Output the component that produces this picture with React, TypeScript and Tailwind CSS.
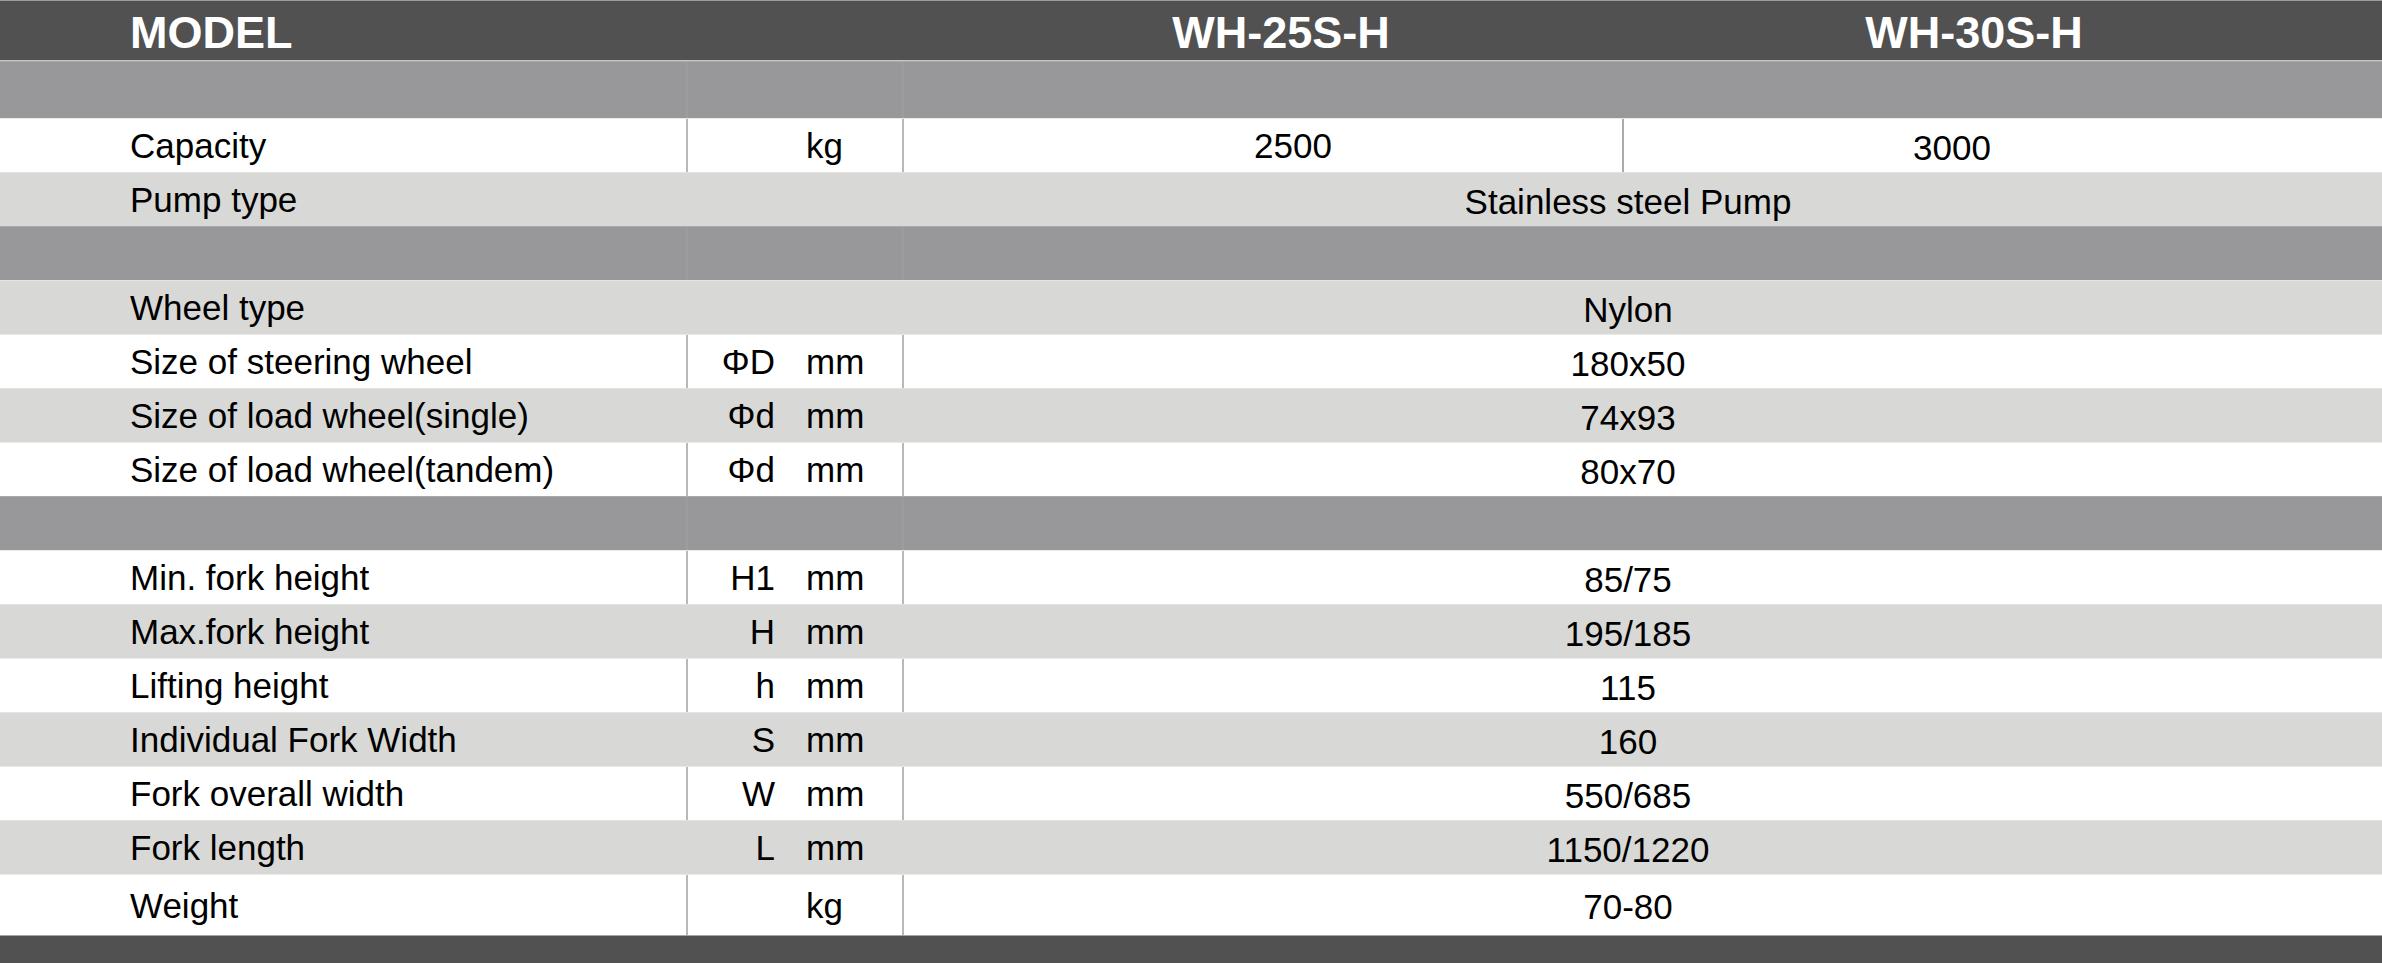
type Spec = {
  kind: "spec";
  label: string;
  sym?: string;
  unit?: string;
  value: string | [string, string];
  tone: "white" | "light";
  tall?: boolean;
};

type Section = { kind: "section"; first?: boolean };

type Row = Spec | Section;

const rows: Row[] = [
  { kind: "section", first: true },
  { kind: "spec", label: "Capacity", unit: "kg", value: ["2500", "3000"], tone: "white" },
  { kind: "spec", label: "Pump type", value: "Stainless steel Pump", tone: "light" },
  { kind: "section" },
  { kind: "spec", label: "Wheel type", value: "Nylon", tone: "light" },
  { kind: "spec", label: "Size of steering wheel", sym: "ΦD", unit: "mm", value: "180x50", tone: "white" },
  { kind: "spec", label: "Size of load wheel(single)", sym: "Φd", unit: "mm", value: "74x93", tone: "light" },
  { kind: "spec", label: "Size of load wheel(tandem)", sym: "Φd", unit: "mm", value: "80x70", tone: "white" },
  { kind: "section" },
  { kind: "spec", label: "Min. fork height", sym: "H1", unit: "mm", value: "85/75", tone: "white" },
  { kind: "spec", label: "Max.fork height", sym: "H", unit: "mm", value: "195/185", tone: "light" },
  { kind: "spec", label: "Lifting height", sym: "h", unit: "mm", value: "115", tone: "white" },
  { kind: "spec", label: "Individual Fork Width", sym: "S", unit: "mm", value: "160", tone: "light" },
  { kind: "spec", label: "Fork overall width", sym: "W", unit: "mm", value: "550/685", tone: "white" },
  { kind: "spec", label: "Fork length", sym: "L", unit: "mm", value: "1150/1220", tone: "light" },
  { kind: "spec", label: "Weight", unit: "kg", value: "70-80", tone: "white", tall: true },
];

export default function App() {
  return (
    <div className="flex h-[963px] w-[2382px] flex-col overflow-hidden bg-white font-['Liberation_Sans',Arial,sans-serif] text-black">
      {/* Header */}
      <div className="flex h-[61px] shrink-0 items-center border-t border-b border-t-[#9c9c9c] border-b-[#c6c6c6] bg-[#515151] text-[45px] leading-none font-bold text-white">
        <div className="w-[904px] pt-[3px] pl-[130px]">MODEL</div>
        <div className="w-[720px] pt-[3px] pl-[34px] text-center">WH-25S-H</div>
        <div className="flex-1 pt-[3px] pr-[58px] text-center">WH-30S-H</div>
      </div>

      {rows.map((row, i) =>
        row.kind === "section" ? (
          <div
            key={i}
            className={`flex shrink-0 border-t border-[#a9a9ab] bg-[#98989a] ${
              row.first ? "h-[57px]" : "h-[54px]"
            }`}
          >
            <div className="w-[688px] border-r-2 border-[#9c9c9e]" />
            <div className="w-[216px] border-r-2 border-[#9c9c9e]" />
          </div>
        ) : (
          <SpecRow key={i} row={row} />
        )
      )}

      {/* Footer */}
      <div className="flex-1 border-t border-[#a4a4a4] bg-[#515151]" />
    </div>
  );
}

function SpecRow({ row }: { row: Spec }) {
  const white = row.tone === "white";
  const line = white ? "border-[#b9b9b9]" : "border-transparent";

  return (
    <div
      className={`flex shrink-0 items-stretch border-t text-[35px] leading-none ${
        row.tall ? "h-[61px]" : "h-[54px]"
      } ${white ? "border-[#e9e9e9] bg-white" : "border-[#e4e4e2] bg-[#d8d8d6]"}`}
    >
      <div className={`flex w-[688px] items-center border-r-2 pl-[130px] ${line}`}>{row.label}</div>
      <div className={`flex w-[216px] items-center border-r-2 ${line}`}>
        {row.unit ? (
          <>
            <span className="w-[87px] text-right">{row.sym ?? ""}</span>
            <span className="ml-[31px]">{row.unit}</span>
          </>
        ) : null}
      </div>
      {Array.isArray(row.value) ? (
        <>
          <div className="flex w-[720px] items-center justify-center border-r-2 border-[#aaaaaa] pl-[60px]">
            {row.value[0]}
          </div>
          <div className="flex flex-1 items-center justify-center pt-[3px] pr-[102px]">{row.value[1]}</div>
        </>
      ) : (
        <div className="flex flex-1 items-center justify-center pt-[3px] pr-[30px]">{row.value}</div>
      )}
    </div>
  );
}
